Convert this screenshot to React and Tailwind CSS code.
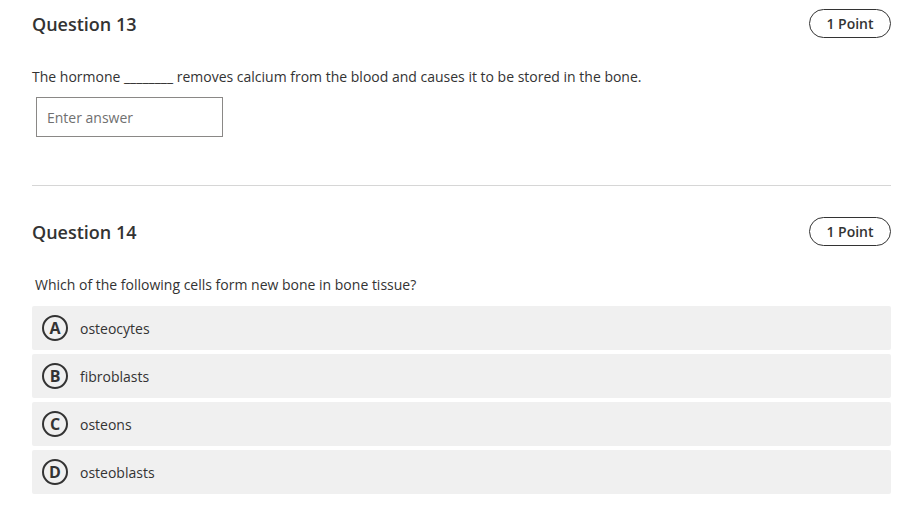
export default function App() {
  const options = [
    { letter: "A", text: "osteocytes" },
    { letter: "B", text: "fibroblasts" },
    { letter: "C", text: "osteons" },
    { letter: "D", text: "osteoblasts" },
  ];

  return (
    <div className="min-h-screen bg-white pl-[32px] pr-[15px] pt-[9px] font-['Open_Sans',sans-serif] text-[#333333]">
      {/* Question 13 */}
      <div className="flex h-[29px] items-center justify-between">
        <h2 className="pt-[2px] text-[18px] font-semibold">Question 13</h2>
        <span className="flex h-[29px] w-[82px] items-center justify-center rounded-full border border-[#333333] text-[14px] font-semibold">
          1 Point
        </span>
      </div>
      <p className="mt-[29px] text-[14px] leading-[20px]">
        The hormone ________ removes calcium from the blood and causes it to be stored in the bone.
      </p>
      <input
        type="text"
        placeholder="Enter answer"
        className="ml-[4px] mt-[10px] h-[40px] w-[187px] border border-[#8a8886] px-[10px] text-[14px] outline-none placeholder:text-[#707070]"
      />

      <div className="mt-[48px] h-px bg-[#d6d6d6]" />

      {/* Question 14 */}
      <div className="mt-[31px] flex h-[29px] items-center justify-between">
        <h2 className="pt-[2px] text-[18px] font-semibold">Question 14</h2>
        <span className="flex h-[29px] w-[82px] items-center justify-center rounded-full border border-[#333333] text-[14px] font-semibold">
          1 Point
        </span>
      </div>
      <p className="mt-[29px] pl-[3px] text-[14px] leading-[20px]">
        Which of the following cells form new bone in bone tissue?
      </p>
      <div className="mt-[11px] flex flex-col gap-[4px]">
        {options.map((o) => (
          <div
            key={o.letter}
            className="flex h-[44px] items-center gap-[12px] rounded-[2px] bg-[#f0f0f0] pl-[10px]"
          >
            <span className="flex h-[26px] w-[26px] items-center justify-center rounded-full border-2 border-[#333333] text-[16px] font-bold leading-none">
              {o.letter}
            </span>
            <span className="text-[14px]">{o.text}</span>
          </div>
        ))}
      </div>
    </div>
  );
}
